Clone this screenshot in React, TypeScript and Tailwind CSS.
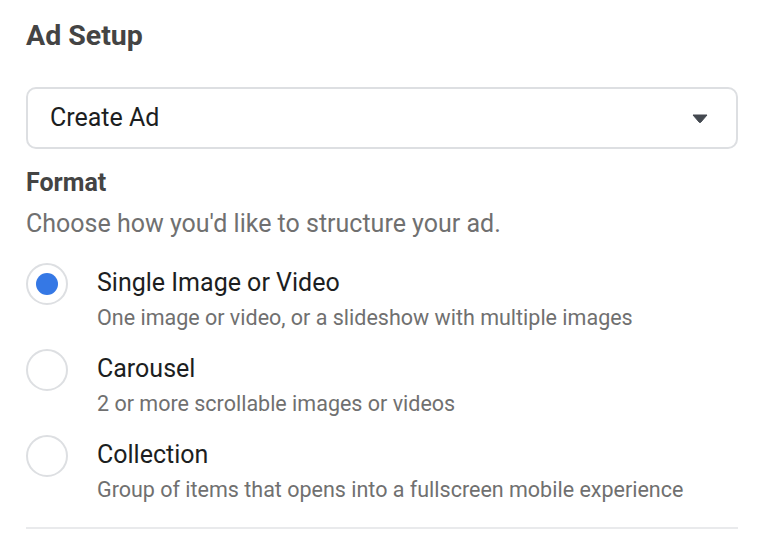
import React from "react";

const options = [
  { id: "single", title: "Single Image or Video", desc: "One image or video, or a slideshow with multiple images" },
  { id: "carousel", title: "Carousel", desc: "2 or more scrollable images or videos" },
  { id: "collection", title: "Collection", desc: "Group of items that opens into a fullscreen mobile experience" },
];

const App: React.FC = () => {
  const [selected, setSelected] = React.useState("single");

  return (
    <div className="w-[758px] h-[544px] bg-white overflow-hidden font-['Roboto',sans-serif]">
      <div className="ml-[26px] w-[712px] pt-[18px]">
        <h2 className="text-[28.5px] leading-[36px] font-bold text-[#444444]">Ad Setup</h2>

        <div className="mt-[33px] h-[62px] rounded-[10px] border-2 border-[#dddfe2] flex items-center justify-between pl-[22px] pr-[28px]">
          <span className="text-[25px] text-[#1c1e21]">Create Ad</span>
          <svg width="16" height="9" viewBox="0 0 16 9">
            <path d="M1 1h14L8.8 8.2a1.1 1.1 0 0 1-1.6 0Z" fill="#444950" stroke="#444950" strokeWidth="1" strokeLinejoin="round" />
          </svg>
        </div>

        <h3 className="mt-[19px] text-[25px] leading-[30px] font-bold text-[#444444]">Format</h3>
        <p className="mt-[11px] text-[25px] leading-[30px] text-[#707070]">Choose how you'd like to structure your ad.</p>

        <div className="mt-[24px] flex flex-col gap-[13px]">
          {options.map(o => (
            <label key={o.id} className="flex items-start cursor-pointer" onClick={() => setSelected(o.id)}>
              <span className="w-[42px] h-[42px] rounded-full border-2 border-[#dddfe2] flex items-center justify-center shrink-0">
                {selected === o.id && <span className="w-[22px] h-[22px] rounded-full bg-[#3578e5]" />}
              </span>
              <span className="ml-[29px] flex flex-col">
                <span className="text-[25px] leading-[34px] text-[#1c1e21] mt-[3px]">{o.title}</span>
                <span className="text-[21.5px] leading-[36px] text-[#707070]">{o.desc}</span>
              </span>
            </label>
          ))}
        </div>

        <div className="mt-[19px] h-[2px] bg-[#e9eaec]" />
      </div>
    </div>
  );
};

export default App;
